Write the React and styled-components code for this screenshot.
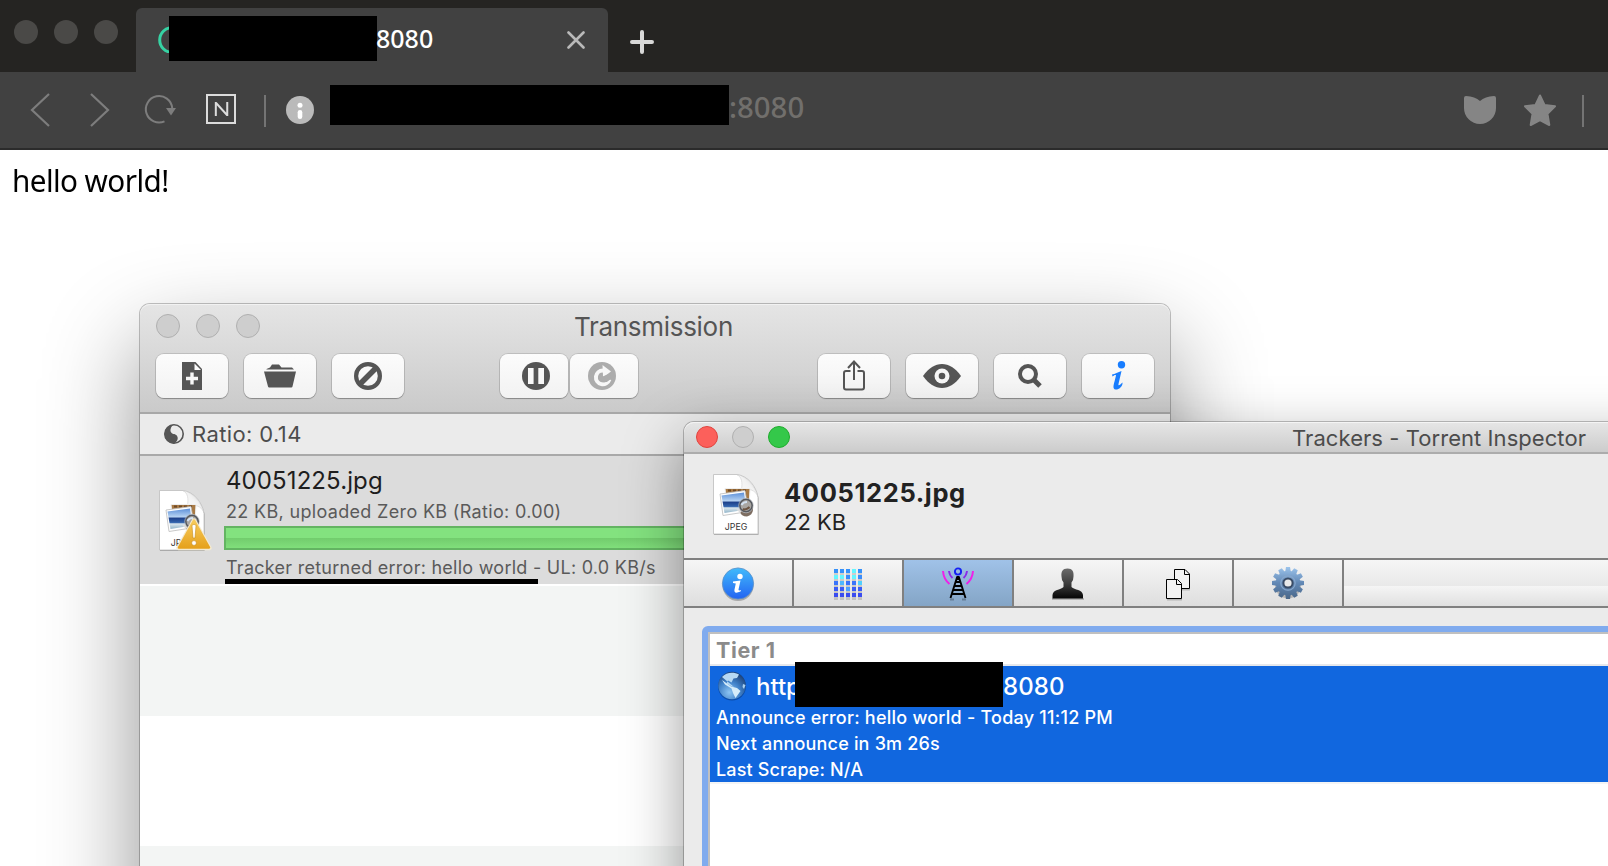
import React from 'react';
import styled, { createGlobalStyle } from 'styled-components';

const GlobalStyle = createGlobalStyle`
  * { box-sizing: border-box; }
  html, body, #root { height: 100%; margin: 0; }
  body { overflow: hidden; background: #fff; font-family: Inter, "Liberation Sans", sans-serif; }
  svg { display: block; flex: none; }
`;

const Screen = styled.div`
  position: relative;
  width: 1608px;
  height: 866px;
  overflow: hidden;
  background: #fff;
`;

const Text = styled.div`
  font-family: ${p => p.$font || 'Inter, "Liberation Sans", sans-serif'};
  font-size: ${p => p.$size}px;
  line-height: ${p => p.$line}px;
  font-weight: ${p => p.$weight || 400};
  letter-spacing: ${p => p.$spacing || 0}px;
  color: ${p => p.$color};
  white-space: pre;
`;
const noto = '"Noto Sans", sans-serif';

/* ---------- browser ---------- */

const TabStrip = styled.div`
  display: flex;
  height: 72px;
  background: #252422;
`;

const BrowserLights = styled.div`
  display: flex;
  gap: 16px;
  width: 136px;
  padding: 20px 0 0 14px;
`;

const BrowserLight = styled.span`
  width: 24px;
  height: 24px;
  border-radius: 50%;
  background: #4a4947;
`;

const Tab = styled.div`
  display: flex;
  align-items: center;
  width: 472px;
  margin-top: 8px;
  padding: 0 23px 0 22px;
  border-radius: 6px 6px 0 0;
  background: #414141;
`;

const Redaction = styled.span`
  flex: none;
  width: ${p => p.$w}px;
  height: ${p => p.$h}px;
  background: #000;
`;

const TabIcon = styled.span`
  width: 11px;
  height: 28px;
  overflow: hidden;
`;

const TabTitle = styled.div`
  display: flex;
  align-items: center;
  flex: 1;
  margin-bottom: 3px;
`;

const TabPort = styled(Text)`
  margin-left: -1px;
`;

const NewTab = styled.span`
  padding: 30px 0 0 22px;
`;

const AddressBar = styled.div`
  display: flex;
  align-items: center;
  height: 78px;
  padding: 0 24px 0 30px;
  background: #414141;
  border-bottom: 2px solid #2b2b2b;
`;

const NavIcons = styled.div`
  display: flex;
  align-items: center;
`;

const Speed = styled.span`
  display: flex;
  align-items: center;
  justify-content: center;
  width: 30px;
  height: 30px;
  margin: -2px 0 0 29px;
  border: 2px solid #dcdcdc;
`;

const SpeedLetter = styled(Text)`
  transform: scaleX(1.18);
`;

const Divider = styled.span`
  width: 2px;
  height: 32px;
  margin: 2px 0 0 ${p => p.$left}px;
  background: #747474;
`;

const Url = styled.div`
  display: flex;
  align-items: center;
  flex: 1;
  margin: 0 0 10px 16px;
`;

const Port = styled(Text)`
  padding-top: 4px;
`;

const Page = styled.div`
  padding: 8px 12px;
`;

const PageText = styled(Text)`
  transform: scaleX(0.957);
  transform-origin: left;
`;

/* ---------- shared window parts ---------- */

const Window = styled.section`
  position: absolute;
  left: ${p => p.$x}px;
  top: ${p => p.$y}px;
  width: ${p => p.$w}px;
  height: ${p => p.$h}px;
  display: flex;
  flex-direction: column;
  border-radius: 10px 10px 0 0;
  background: #ebebeb;
  box-shadow: 0 0 0 1px rgba(0, 0, 0, 0.23), ${p => p.$shadow};
`;

const Lights = styled.div`
  display: flex;
  gap: ${p => p.$gap}px;
`;

const Light = styled.span`
  width: ${p => p.$size}px;
  height: ${p => p.$size}px;
  border-radius: 50%;
  border: 1px solid ${p => p.$edge || '#b0b0b0'};
  background: ${p => p.$fill || '#cecece'};
`;

/* ---------- torrent list window ---------- */

const Header = styled.header`
  height: 110px;
  border-radius: 10px 10px 0 0;
  border-bottom: 2px solid #a8a8a8;
  background: linear-gradient(#e5e5e5, #cacaca);
  box-shadow: inset 0 1px 0 #f2f2f2;
`;

const TitleRow = styled.div`
  display: grid;
  grid-template-columns: 418px 1fr;
  align-items: center;
  height: 50px;
  padding: 0 0 6px 16px;
`;

const WindowTitle = styled(Text)`
  padding-top: 2px;
`;

const Tools = styled.div`
  display: flex;
  padding: 0 16px;
`;

const ToolGroup = styled.div`
  display: flex;
  gap: ${p => p.$gap}px;
  margin-left: ${p => p.$left || 0};
`;

const Tool = styled.span`
  display: flex;
  align-items: center;
  justify-content: center;
  width: ${p => p.$w || 72}px;
  height: 44px;
  padding: ${p => p.$pad || 0};
  border-radius: 8px;
  background: linear-gradient(#fcfcfc, #f2f2f2);
  box-shadow: 0 0 0 1px rgba(0, 0, 0, 0.12), 0 1px 1px rgba(0, 0, 0, 0.25);
`;

const StatusBar = styled.div`
  display: flex;
  align-items: center;
  gap: 8px;
  height: 42px;
  padding-left: 24px;
  border-bottom: 2px solid #a9a9a9;
  background: #ebebeb;
`;

const TorrentRow = styled.div`
  display: flex;
  height: 130px;
  background: #dcdcdc;
  border-bottom: 2px solid #fff;
`;

const BlankRow = styled.div`
  height: 130px;
  background: ${p => (p.$tinted ? '#f3f5f4' : '#fff')};
`;

const FileBadge = styled.div`
  position: relative;
  width: 84px;
  padding: 33px 0 0 18px;
`;

const Warning = styled.svg`
  position: absolute;
  left: 35px;
  top: 60px;
`;

const TorrentBody = styled.div`
  flex: 1;
  padding-top: 11px;
`;

const TorrentText = styled(Text)`
  margin: ${p => p.$top || 0}px 0 0 2px;
`;

const Progress = styled.div`
  height: 24px;
  margin-top: 3px;
  border: 2px solid #63b462;
  background: linear-gradient(#83e27f 0 48%, #72cc6d 50%, #80df7b 100%);
`;

const Underline = styled.div`
  width: 313px;
  height: 5px;
  margin: 0 0 0 1px;
  background: #000;
`;

/* ---------- inspector window ---------- */

const InspectorTitle = styled.header`
  display: flex;
  align-items: center;
  justify-content: space-between;
  height: 32px;
  padding: 0 113px 0 12px;
  border-radius: 10px 10px 0 0;
  border-bottom: 2px solid #acacac;
  background: linear-gradient(#e6e6e6, #cccccc);
  box-shadow: inset 0 1px 0 #f4f4f4;
`;

const InspectorTitleText = styled(Text)`
  padding-top: 1px;
`;

const Summary = styled.div`
  display: flex;
  height: 104px;
  padding: 19px 0 0 28px;
`;

const SummaryText = styled.div`
  padding-left: 24px;
`;

const Tabs = styled.nav`
  display: flex;
  height: 50px;
  border-top: 2px solid #808080;
  border-bottom: 2px solid #808080;
`;

const InspectorTab = styled.span`
  display: flex;
  align-items: center;
  justify-content: center;
  width: 110px;
  padding-top: 2px;
  border-right: 2px solid #808080;
  background: ${p => (p.$active
    ? 'linear-gradient(#a0c2e8, #84a5c6)'
    : 'linear-gradient(#f6f6f6, #dedede)')};
`;

const TabsRest = styled.span`
  flex: 1;
  background:
    linear-gradient(#f6f6f6, #e9e9e9) 0 0 / 100% 26px no-repeat,
    linear-gradient(#f5f5f5, #e0e0e0) 0 26px / 100% 20px no-repeat;
`;

const TrackerList = styled.div`
  flex: 1;
  width: 960px;
  margin: 18px 0 0 18px;
  border: 6px solid #80abee;
  border-radius: 6px;
  background: #fff;
`;

const TrackerInner = styled.div`
  height: 100%;
  border: 2px solid #c0c0c0;
`;

const Tier = styled.div`
  height: 32px;
  padding: 2px 0 0 6px;
  border-bottom: 2px solid #e6e8ec;
`;

const Tracker = styled.div`
  display: flex;
  flex-direction: column;
  height: 118px;
  padding-left: 6px;
  background: #1167df;
  border-bottom: 2px solid #f3f4f5;
`;

const TrackerAddress = styled.div`
  display: flex;
  align-items: flex-start;
  flex: none;
  height: 43px;
  margin-top: -4px;
`;

const AddressIcon = styled.span`
  width: 40px;
  padding: 9px 0 0 1px;
`;

const Scheme = styled(Text)`
  width: 39px;
  padding-top: 10px;
`;

const TrackerPort = styled(Text)`
  padding-top: 10px;
`;

/* ---------- drawings ---------- */

function FileIcon() {
  return (
    <svg width="48" height="63" viewBox="-1 -1 48 63">
      <defs>
        <linearGradient id="sky" x1="0" y1="0" x2="0" y2="1">
          <stop offset="0" stopColor="#5c8fd8" /><stop offset=".42" stopColor="#b9d5f3" />
          <stop offset=".46" stopColor="#1d3f88" /><stop offset=".68" stopColor="#3264ad" />
          <stop offset=".75" stopColor="#dce8ee" /><stop offset="1" stopColor="#8fb3c8" />
        </linearGradient>
        <linearGradient id="curl" x1="0" y1="1" x2="1" y2="0">
          <stop offset="0" stopColor="#fff" /><stop offset=".55" stopColor="#f2f2f2" /><stop offset="1" stopColor="#cfcfcf" />
        </linearGradient>
      </defs>
      <path d="M1 1.5H25C36 3 43 14 45.500 24V61H1Z" fill="rgba(0,0,0,.28)" />
      <path d="M.5 .5H24C35 2 43 12 45 23V60H.5Z" fill="#fff" stroke="#bcbcbc" strokeWidth=".8" />
      <path d="M24 .7C29 3 29.500 9 28.500 15.500C35 14 43 16 45 23C42 12 34 2 24 .7Z" fill="url(#curl)" stroke="#c8c8c8" strokeWidth=".5" />
      <path d="M12 14.500L37 14.500L36 33L14 33Z" fill="#a87a45" stroke="#eee" />
      <path d="M15 16.500H35" stroke="#6e4824" strokeWidth="2" strokeDasharray="3 2" />
      <path d="M7 20L32 16.500L35.500 37.500L10 41.500Z" fill="#fff" stroke="#bbb" strokeWidth=".8" />
      <path d="M8.500 21.500L31 18.500L33.500 35.500L11.500 39Z" fill="url(#sky)" />
      <path d="M27 32V37.500Q28 42.500 34 42.500Q39.500 41 40 36V31Z" fill="#7d6d61" />
      <circle cx="33" cy="31.500" r="6.300" fill="#a9a6a2" stroke="#55585e" strokeWidth="1.700" />
      <circle cx="33" cy="31.500" r="7.300" fill="none" stroke="#b9bdc3" strokeWidth=".7" />
      <path d="M28.500 31C29 30 31 28 34 28" fill="none" stroke="#d3e2f2" strokeWidth="2" />
      <path d="M30 35Q33 36.500 36.500 33" fill="none" stroke="#6d5543" strokeWidth="2" />
      <path d="M24 35L28 38" stroke="#ddd" strokeWidth="2" />
      <text x="23" y="56" textAnchor="middle" fontFamily="Inter, sans-serif" fontSize="8.800" fill="#333">JPEG</text>
    </svg>
  );
}

function WarningIcon() {
  return (
    <Warning width="38" height="36" viewBox="0 0 38 36">
      <defs>
        <linearGradient id="warn" x1="0" y1="0" x2="0" y2="1">
          <stop offset="0" stopColor="#f7cb5c" /><stop offset="1" stopColor="#e6a21d" />
        </linearGradient>
      </defs>
      <path d="M19 4.500L34.500 32H3.500Z" fill="#f4ead0" stroke="#f4ead0" strokeWidth="4.500" strokeLinejoin="round" />
      <path d="M19 4.500L34 31.500H4Z" fill="url(#warn)" stroke="url(#warn)" strokeWidth="2.500" strokeLinejoin="round" />
      <path d="M17 10C17 8 21 8 21 10L20 22H18Z" fill="#fff" stroke="#c58c1c" strokeWidth=".6" />
      <circle cx="19" cy="27" r="2.400" fill="#fff" stroke="#c58c1c" strokeWidth=".6" />
    </Warning>
  );
}

const ink = '#555';

const AddDoc = () => (
  <svg width="22" height="28" viewBox="0 0 22 28">
    <path d="M1 0H14.500L21 7V28H1Z" fill={ink} />
    <path d="M13.500 1.500V8H20Z" fill="#fafafa" />
    <path d="M11 10.500V22.500M5 16.500H17" stroke="#f7f7f7" strokeWidth="3.400" />
  </svg>
);

const Folder = () => (
  <svg width="32" height="24" viewBox="0 0 32 24">
    <path d="M2.500 5.500V5L6 3.500L8 .5H15L17.500 3.500H28L30 5.500Z" fill={ink} />
    <path d="M0 7.500H32L28.500 22.500Q28.300 23.500 27.300 23.500H5.200Q4.200 23.500 4 22.500Z" fill={ink} />
  </svg>
);

const Ban = () => (
  <svg width="28" height="28" viewBox="0 0 28 28">
    <circle cx="14" cy="14" r="11.900" fill="none" stroke={ink} strokeWidth="4.200" />
    <path d="M5 23L23 5" stroke={ink} strokeWidth="5.500" />
  </svg>
);

const Pause = () => (
  <svg width="28" height="28" viewBox="0 0 28 28">
    <circle cx="14" cy="14" r="14" fill={ink} />
    <path d="M6 6H11.600V22H6ZM16.300 6H22V22H16.300Z" fill="#f8f8f8" />
  </svg>
);

const Resume = () => (
  <svg width="28" height="28" viewBox="0 0 28 28">
    <circle cx="14" cy="14" r="14" fill="#acacac" />
    <path d="M15 8.500A6.900 6.900 0 1 0 21.400 17.500" fill="none" stroke="#f7f7f7" strokeWidth="4" />
    <path d="M14.500 3L23 9.500L15 15.500Z" fill="#f7f7f7" />
    <path d="M10.300 16.200Q10.300 11.800 14.500 11.200V14.500L22.200 11.500V17.500Q19.500 20.500 15.500 20.300Q11 19.800 10.300 16.200Z" fill="#acacac" />
  </svg>
);

const Share = () => (
  <svg width="22" height="34" viewBox="0 0 22 34">
    <path d="M7.500 12H3Q1 12 1 14V28.500Q1 30.500 3 30.500H19Q21 30.500 21 28.500V14Q21 12 19 12H14.500" fill="none" stroke={ink} strokeWidth="2" />
    <path d="M11 21V3M5 9L11 2.500L17 9" fill="none" stroke={ink} strokeWidth="2" />
  </svg>
);

const Eye = () => (
  <svg width="38" height="24" viewBox="0 0 38 24">
    <path d="M0 12C11 -4 27 -4 38 12C27 28 11 28 0 12Z" fill={ink} />
    <circle cx="19" cy="12" r="7.500" fill="#f7f7f7" />
    <circle cx="19" cy="12" r="3.300" fill={ink} />
  </svg>
);

const Search = () => (
  <svg width="24" height="24" viewBox="0 0 24 24">
    <circle cx="10" cy="10" r="8" fill="none" stroke={ink} strokeWidth="4" />
    <path d="M15.500 15.500L22 22" stroke={ink} strokeWidth="5" />
  </svg>
);

const InfoGlyph = () => (
  <svg width="20" height="32" viewBox="0 0 20 32">
    <circle cx="13.500" cy="4.700" r="3.700" fill="#187dff" />
    <path d="M4 14.500C7 14 10 12 13.500 11L10.500 24C10 26.500 12 25 14.500 22.500C15 27 10 30 7.500 29.500C4.500 29 5.500 25 6.500 21.500L8 15.500C7.500 14.500 6 15.500 4.500 16.500Z" fill="#187dff" />
  </svg>
);

const RatioIcon = () => (
  <svg width="20" height="20" viewBox="0 0 20 20">
    <circle cx="10" cy="10" r="9.200" fill="#ebebeb" stroke={ink} strokeWidth="1.600" />
    <path d="M10 .5A9.500 9.500 0 0 0 10 19.500C14 17.500 15 13 12 11C9 10 6 9 6.500 5.500C7 2.500 9 1 10 .5Z" fill={ink} />
    <path d="M10 19.500C6 19.500 13 20 13 14C13 12.500 12.500 11 10 10L6 12Z" fill={ink} />
  </svg>
);

const InspectorInfo = () => (
  <svg width="34" height="36" viewBox="0 0 34 36">
    <defs>
      <linearGradient id="ball" x1="0" y1="0" x2="0" y2="1">
        <stop offset="0" stopColor="#41bbfb" /><stop offset="1" stopColor="#2363f2" />
      </linearGradient>
    </defs>
    <ellipse cx="17" cy="19.500" rx="15.500" ry="15.500" fill="rgba(0,0,0,.25)" />
    <circle cx="17" cy="17.500" r="15.600" fill="url(#ball)" stroke="#5a8fc8" strokeWidth=".8" />
    <circle cx="19" cy="10.500" r="2.700" fill="#fff" />
    <path d="M12 15.500L19.500 14.500L17.500 23.500Q17.500 25 20 24L19.500 25.500Q12.500 28.500 13.500 23.500L14.800 17.500L12 17Z" fill="#fff" />
  </svg>
);

const pieceColors = [
  '#3591fb', '#3591fb', '#3591fb', '#64f6ff', '#3591fb',
  '#64f6ff', '#64f6ff', '#3a8cfb', '#64f6ff', '#3a8cfb',
  '#3a74fb', '#4fb8ff', '#3a74fb', '#3a74fb', '#4fd0ff',
  '#3a5cf5', '#3a5cf5', '#4fa0ff', '#3a5cf5', '#3a5cf5',
  '#3a4cf0', '#3a4cf0', '#3a4cf0', '#3a4cf0', '#3a4cf0',
];

const Pieces = () => (
  <svg width="28" height="32" viewBox="0 0 28 32">
    {pieceColors.map((c, i) => (
      <g key={i}>
        <rect x={(i % 5) * 6} y={Math.floor(i / 5) * 6 + 4} width="4" height="4" fill="rgba(0,0,0,.14)" />
        <rect x={(i % 5) * 6} y={Math.floor(i / 5) * 6 + 1} width="4" height="4" fill={c} />
      </g>
    ))}
  </svg>
);

const Tower = () => (
  <svg width="34" height="36" viewBox="-17 0 34 36">
    <path d="M-8 33.500H-4M4 33.500H8" stroke="rgba(0,0,0,.25)" strokeWidth="2" />
    <path d="M-7.500 32L-1 11.500H1L7.500 32M-2.500 16H2.500M-3.500 20H3.500M-5 24H5M-6 28H6" fill="none" stroke="#000" strokeWidth="1.900" />
    <path d="M0 10V14" stroke="#000" strokeWidth="2.600" />
    <circle cx="0" cy="5.500" r="3.100" fill="none" stroke="#1420f5" strokeWidth="1.900" />
    <path d="M-9 5Q-8.500 9.500-5.500 12M9 5Q8.500 9.500 5.500 12" fill="none" stroke="#8a2be8" strokeWidth="1.900" />
    <path d="M-15 5Q-14.500 13-8.500 18M15 5Q14.500 13 8.500 18" fill="none" stroke="#f01fe8" strokeWidth="2" />
  </svg>
);

const Person = () => (
  <svg width="34" height="34" viewBox="0 0 34 34">
    <defs>
      <linearGradient id="bust" x1="0" y1="0" x2="0" y2="1">
        <stop offset="0" stopColor="#6b6b6b" /><stop offset=".5" stopColor="#3e3e3e" /><stop offset="1" stopColor="#050505" />
      </linearGradient>
    </defs>
    <path d="M1 31V33H33V31Z" fill="rgba(0,0,0,.2)" />
    <path d="M16.500 1.500C21.500 1.500 23 4.500 22.500 9.500Q22.500 13.500 20.500 15.500V20C23.500 23 31.500 22.500 32 28V31.500H1.500V28C2 22.500 9.500 23 12.500 20V15.500Q10.500 13.500 10.500 9.500C10 4.500 11.500 1.500 16.500 1.500Z" fill="url(#bust)" />
  </svg>
);

const Pages = () => (
  <svg width="24" height="34" viewBox="0 0 24 34">
    <path d="M9 22.500H24M1 32.500H16" stroke="rgba(0,0,0,.2)" strokeWidth="2" />
    <path d="M8.500 2.500H19L23.500 7V21.500H8.500Z" fill="#f2f2f2" stroke="#000" />
    <path d="M18.500 2.500V7.500H23.500" fill="none" stroke="#000" />
    <path d="M.5 12.500H11.500L15.500 16.500V31.500H.5Z" fill="#f2f2f2" stroke="#000" />
    <path d="M10.500 12.500V17.500H15.500" fill="none" stroke="#000" />
  </svg>
);

const teeth = Array.from({ length: 12 }, (_, i) => i * 30);

const Gear = () => (
  <svg width="34" height="36" viewBox="-17 -17 34 36">
    <defs>
      <linearGradient id="steel" gradientUnits="userSpaceOnUse" x1="0" y1="-16" x2="0" y2="16">
        <stop offset="0" stopColor="#9cc4ec" /><stop offset=".5" stopColor="#6288b5" /><stop offset="1" stopColor="#4a6789" />
      </linearGradient>
    </defs>
    <circle cx="0" cy="2.500" r="13" fill="rgba(0,0,0,.2)" />
    <mask id="cog">
      <circle cx="0" cy="0" r="12.200" fill="#fff" />
      {teeth.map(a => (
        <path key={a} d="M-3 -10L-2 -16H2L3 -10Z" fill="#fff" transform={`rotate(${a})`} />
      ))}
    </mask>
    <rect x="-17" y="-17" width="34" height="34" fill="url(#steel)" mask="url(#cog)" />
    <circle cx="0" cy="0" r="7.200" fill="none" stroke="#87a7cc" strokeWidth="1.200" />
    <circle cx="0" cy="0" r="4.600" fill="#e9e9e9" stroke="#3a4c66" strokeWidth="2" />
  </svg>
);

const Globe = () => (
  <svg width="30" height="30" viewBox="0 0 30 30">
    <defs>
      <radialGradient id="sea" cx=".4" cy=".75" r=".8">
        <stop offset="0" stopColor="#8cc4f2" /><stop offset=".5" stopColor="#3f80c8" /><stop offset="1" stopColor="#173a70" />
      </radialGradient>
    </defs>
    <circle cx="15" cy="15.500" r="14" fill="#0b4ca9" />
    <circle cx="15" cy="14.500" r="13.700" fill="url(#sea)" />
    <path d="M5 6C9 1 17 .5 22 3.500L20 7L16.500 7.500L14.500 11.500L11 9.500L9.500 12.500L14 15L17 16Z" fill="#b5d8f4" />
    <path d="M14 15.500L20 17L23.500 20L18.500 27L16 22L14.500 17.500L8 13.500L5 9Z" fill="#d5ecfa" />
    <path d="M26 13L28.500 14L27 18L25.500 16Z" fill="#a9d0f0" />
  </svg>
);

export default function App() {
  return (
    <Screen>
      <GlobalStyle />
      <TabStrip>
        <BrowserLights><BrowserLight /><BrowserLight /><BrowserLight /></BrowserLights>
        <Tab>
          <TabTitle>
            <TabIcon>
              <svg width="28" height="28" viewBox="0 0 28 28"><circle cx="14" cy="15" r="12.300" fill="none" stroke="#36d2a3" strokeWidth="3" /></svg>
            </TabIcon>
            <Redaction $w={208} $h={45} />
            <TabPort $font={noto} $size={25} $line={41} $weight={500} $color="#fff">8080</TabPort>
          </TabTitle>
          <svg width="18" height="18" viewBox="0 0 18 18"><path d="M1.500 1.500L16.500 16.500M16.500 1.500L1.500 16.500" stroke="#b9b9b9" strokeWidth="2.600" strokeLinecap="round" /></svg>
        </Tab>
        <NewTab>
          <svg width="24" height="24" viewBox="0 0 24 24"><path d="M12 2V22M2 12H22" stroke="#d8d8d8" strokeWidth="4" strokeLinecap="round" /></svg>
        </NewTab>
      </TabStrip>

      <AddressBar>
        <NavIcons>
          <svg width="20" height="34" viewBox="0 0 20 34"><path d="M19 1L2 17L19 33" fill="none" stroke="#7d7d7d" strokeWidth="2.200" /></svg>
          <svg width="80" height="34" viewBox="-40 0 80 34"><path d="M1 1L18 17L1 33" fill="none" stroke="#7d7d7d" strokeWidth="2.200" /></svg>
          <svg width="47" height="34" viewBox="130 93 47 34">
            <path d="M164.500 121.300A13.200 13.200 0 1 1 172.200 108" fill="none" stroke="#7d7d7d" strokeWidth="2" />
            <path d="M166 108H176L171 115.500Z" fill="#7d7d7d" />
          </svg>
          <Speed><SpeedLetter $font="Lato, sans-serif" $size={19.5} $line={26} $color="#dcdcdc">N</SpeedLetter></Speed>
          <Divider $left={28} />
          <svg width="48" height="28" viewBox="-20 0 48 28">
            <circle cx="14" cy="14" r="14" fill="#bababa" />
            <circle cx="14" cy="9.300" r="2.500" fill="#fff" />
            <path d="M14 16.300V20.800" stroke="#fff" strokeWidth="4.600" strokeLinecap="round" />
          </svg>
        </NavIcons>
        <Url>
          <Redaction $w={399} $h={40} />
          <Port $font={noto} $size={29.4} $line={36} $weight={500} $color="#716f6c">:8080</Port>
        </Url>
        <svg width="32" height="28" viewBox="0 0 32 28"><path d="M2 0Q11 .5 16 5Q21 .5 30 0Q32 0 32 2V12A16 16 0 0 1 0 12V2Q0 0 2 0Z" fill="#858585" /></svg>
        <svg width="60" height="32" viewBox="-28 0 60 32"><path d="M16 1.500L20.500 11L31 12.300L23.500 19.800L25.300 31L16 26L6.700 31L8.500 19.800L1 12.300L11.500 11Z" fill="#858585" stroke="#858585" strokeWidth="2" strokeLinejoin="round" /></svg>
        <Divider $left={26} />
      </AddressBar>

      <Page>
        <PageText $font={noto} $size={31} $line={45} $spacing={-0.6} $color="#000">hello world!</PageText>
      </Page>

      <Window $x={140} $y={304} $w={1030} $h={900} $shadow="0 42px 94px rgba(0,0,0,.44)">
        <Header>
          <TitleRow>
            <Lights $gap={16}><Light $size={24} /><Light $size={24} /><Light $size={24} /></Lights>
            <WindowTitle $size={26} $line={34} $spacing={-0.3} $color="#555">Transmission</WindowTitle>
          </TitleRow>
          <Tools>
            <ToolGroup $gap={16}>
              <Tool><AddDoc /></Tool><Tool><Folder /></Tool><Tool><Ban /></Tool>
            </ToolGroup>
            <ToolGroup $gap={2} $left="96px">
              <Tool $w={68} $pad="0 0 0 4px"><Pause /></Tool><Tool $w={68} $pad="0 4px 0 0"><Resume /></Tool>
            </ToolGroup>
            <ToolGroup $gap={16} $left="auto">
              <Tool><Share /></Tool><Tool><Eye /></Tool><Tool><Search /></Tool><Tool><InfoGlyph /></Tool>
            </ToolGroup>
          </Tools>
        </Header>
        <StatusBar>
          <RatioIcon />
          <Text $size={22} $line={30} $spacing={0.38} $color="#4d4d4d">Ratio: 0.14</Text>
        </StatusBar>
        <TorrentRow>
          <FileBadge><FileIcon /><WarningIcon /></FileBadge>
          <TorrentBody>
            <TorrentText $size={24} $line={28} $spacing={0.1} $color="#1e1e1e">40051225.jpg</TorrentText>
            <TorrentText $top={5} $size={18} $line={23} $spacing={0.33} $color="#5a5a5a">22 KB, uploaded Zero KB (Ratio: 0.00)</TorrentText>
            <Progress />
            <TorrentText $top={7} $size={18} $line={22} $spacing={0.26} $color="#5a5a5a">Tracker returned error: hello world - UL: 0.0 KB/s</TorrentText>
            <Underline />
          </TorrentBody>
        </TorrentRow>
        <BlankRow $tinted /><BlankRow /><BlankRow $tinted />
      </Window>

      <Window $x={684} $y={422} $w={1015} $h={600} $shadow="0 20px 60px rgba(0,0,0,.4)">
        <InspectorTitle>
          <Lights $gap={14}>
            <Light $size={22} $fill="#fc605b" $edge="#e0443e" />
            <Light $size={22} />
            <Light $size={22} $fill="#34c84a" $edge="#1eac2c" />
          </Lights>
          <InspectorTitleText $size={22} $line={30} $spacing={0.06} $color="#4c4c4c">Trackers - Torrent Inspector</InspectorTitleText>
        </InspectorTitle>
        <Summary>
          <FileIcon />
          <SummaryText>
            <Text $size={25.5} $line={39} $weight={700} $spacing={0.62} $color="#222">40051225.jpg</Text>
            <Text $size={22} $line={20} $color="#222">22 KB</Text>
          </SummaryText>
        </Summary>
        <Tabs>
          <InspectorTab><InspectorInfo /></InspectorTab>
          <InspectorTab><Pieces /></InspectorTab>
          <InspectorTab $active><Tower /></InspectorTab>
          <InspectorTab><Person /></InspectorTab>
          <InspectorTab><Pages /></InspectorTab>
          <InspectorTab><Gear /></InspectorTab>
          <TabsRest />
        </Tabs>
        <TrackerList>
          <TrackerInner>
            <Tier><Text $size={21.5} $line={28} $weight={700} $spacing={0.6} $color="#8b8b8b">Tier 1</Text></Tier>
            <Tracker>
              <TrackerAddress>
                <AddressIcon><Globe /></AddressIcon>
                <Scheme $size={24} $line={30} $weight={450} $color="#fff">http</Scheme>
                <Redaction $w={208} $h={45} />
                <TrackerPort $size={24} $line={30} $weight={450} $spacing={0.1} $color="#fff">8080</TrackerPort>
              </TrackerAddress>
              <Text $size={18} $line={26} $weight={500} $spacing={0.23} $color="#fff">Announce error: hello world - Today 11:12 PM</Text>
              <Text $size={18} $line={26} $weight={500} $spacing={0.19} $color="#fff">Next announce in 3m 26s</Text>
              <Text $size={18} $line={26} $weight={500} $spacing={0.15} $color="#fff">Last Scrape: N/A</Text>
            </Tracker>
          </TrackerInner>
        </TrackerList>
      </Window>
    </Screen>
  );
}
